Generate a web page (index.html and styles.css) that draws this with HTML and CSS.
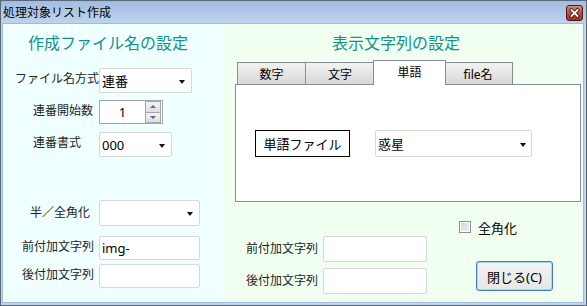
FILE: index.html
```html
<!DOCTYPE html>
<html>
<head>
    <title>処理対象リスト作成</title>
    <meta charset="utf-8">
    <link rel="stylesheet" href="styles.css">
</head>
<body>
    <div class="window">
        <div class="titlebar">
            <span class="title">処理対象リスト作成</span>
            <span class="close-btn">
                <svg width="17" height="16" viewBox="0 0 17 16">
                    <path d="M5.5 5 L11.5 11 M11.5 5 L5.5 11" stroke="#3a1410" stroke-width="3.4" stroke-linecap="square"/>
                    <path d="M5.5 5 L11.5 11 M11.5 5 L5.5 11" stroke="#fff" stroke-width="1.8" stroke-linecap="square"/>
                </svg>
            </span>
        </div>

        <div class="client">
            <!-- 左：作成ファイル名 -->
            <section class="pane pane-file">
                <h2 class="pane-title">作成ファイル名の設定</h2>

                <div class="form-row row-method">
                    <label class="lbl lbl-method">ファイル名方式</label>
                    <div class="combo combo-method"><span>連番</span><i class="caret"></i></div>
                </div>
                <div class="form-row row-start">
                    <label class="lbl lbl-seq">連番開始数</label>
                    <div class="spin">
                        <span class="spin-value">1</span>
                        <div class="spin-btns">
                            <span class="spin-btn"><i class="arrow-up"></i></span>
                            <span class="spin-btn"><i class="arrow-down"></i></span>
                        </div>
                    </div>
                </div>
                <div class="form-row row-format">
                    <label class="lbl lbl-seq">連番書式</label>
                    <div class="combo combo-format"><span>000</span><i class="caret"></i></div>
                </div>
                <div class="form-row row-width">
                    <label class="lbl lbl-width">半／全角化</label>
                    <div class="combo combo-width"><span></span><i class="caret"></i></div>
                </div>
                <div class="form-row row-prefix">
                    <label class="lbl lbl-fix">前付加文字列</label>
                    <div class="textbox textbox-left">img-</div>
                </div>
                <div class="form-row row-suffix">
                    <label class="lbl lbl-fix">後付加文字列</label>
                    <div class="textbox textbox-left"></div>
                </div>
            </section>

            <!-- 右：表示文字列 -->
            <section class="pane pane-text">
                <h2 class="pane-title title-right">表示文字列の設定</h2>

                <div class="tabs">
                    <span class="tab">数字</span>
                    <span class="tab">文字</span>
                    <span class="tab active">単語</span>
                    <span class="tab">file名</span>
                </div>
                <div class="tab-panel">
                    <div class="word-row">
                        <span class="word-label">単語ファイル</span>
                        <div class="combo combo-word"><span>惑星</span><i class="caret"></i></div>
                    </div>
                </div>

                <div class="check-row">
                    <span class="checkbox"></span>
                    <span>全角化</span>
                </div>

                <div class="extras">
                    <label class="lbl-right">前付加文字列</label>
                    <div class="textbox textbox-right"></div>
                    <button class="close-action">閉じる(C)</button>
                    <label class="lbl-right">後付加文字列</label>
                    <div class="textbox textbox-right"></div>
                </div>
            </section>
        </div>
    </div>
</body>
</html>
```

FILE: styles.css
```css
:root {
    --frame-color: #c0d5ee;
    --label-color: #1e2424;
    --heading-color: #10928f;
    --field-border: #d6d9dc;
}

* {
    box-sizing: border-box;
}

body {
    margin: 0;
    font-family: "Noto Sans", "Noto Sans CJK JP", sans-serif;
    font-size: 12px;
    color: var(--label-color);
}

.window {
    width: 587px;
    height: 306px;
    border: 1px solid #5b6878;
    background-color: var(--frame-color);
    padding: 0 3px 3px 2px;
    display: flex;
    flex-direction: column;
}

.titlebar {
    height: 23px;
    margin: 0 -3px 0 -2px;
    padding: 0 3px 0 2px;
    background: linear-gradient(to bottom, #a2bde0, #bfd4ee);
    display: flex;
    align-items: center;
    justify-content: space-between;
}

.title {
    font-size: 12px;
    color: #000;
    line-height: 16px;
}

.close-btn {
    width: 17px;
    height: 16px;
    margin-top: 1px;
    border: 1px solid #4e1a12;
    border-radius: 3px;
    background: linear-gradient(to bottom, #d88a78, #c0533e 45%, #a8301c);
    display: flex;
}

.close-btn svg {
    margin: -1px;
}

.client {
    flex: 1;
    display: flex;
    box-shadow: 0 0 0 1px #9fbbdc;
}

.pane {
    height: 100%;
}

.pane-file {
    width: 220px;
    background-color: #f0ffff;
}

.pane-text {
    flex: 1;
    background-color: #f0fff0;
}

.pane-title {
    margin: 0;
    padding: 9px 0 0 25px;
    font-size: 16px;
    line-height: 20px;
    font-weight: normal;
    color: var(--heading-color);
}

.title-right {
    padding-left: 109px;
}

/* 左側フォーム */
.form-row {
    display: flex;
    align-items: center;
}

.row-method { margin-top: 15px; height: 25px; }
.row-start  { margin-top: 7px;  height: 24px; }
.row-format { margin-top: 8px;  height: 25px; }
.row-width  { margin-top: 43px; height: 26px; }
.row-prefix { margin-top: 10px; height: 24px; }
.row-suffix { margin-top: 4px;  height: 24px; }

.lbl {
    width: 96px;
    flex-shrink: 0;
    line-height: 16px;
    white-space: nowrap;
    margin-top: -3px;
}

.lbl-method { padding-left: 12px; }
.lbl-seq    { padding-left: 30px; }
.lbl-width  { padding-left: 27px; margin-top: 0; }
.lbl-fix    { padding-left: 19px; }

.combo,
.textbox {
    position: relative;
    height: 100%;
    background-color: #fff;
    border: 1px solid var(--field-border);
    border-radius: 2px;
    padding-left: 2px;
    display: flex;
    align-items: center;
    color: #000;
    font-size: 12px;
}

.combo span {
    font-size: 13px;
}

.caret {
    position: absolute;
    right: 6px;
    top: 50%;
    margin-top: -1px;
    border-left: 3.5px solid transparent;
    border-right: 3.5px solid transparent;
    border-top: 4px solid #111;
}

.combo-method { width: 93px; }
.combo-format { width: 73px; }
.combo-width  { width: 101px; }
.textbox-left { width: 101px; font-size: 13px; }

.spin {
    width: 64px;
    height: 100%;
    background-color: #fff;
    border: 1px solid #a6a6a6;
    display: flex;
    align-items: center;
}

.spin-value {
    flex: 1;
    text-align: center;
    font-size: 13px;
    color: #000;
}

.spin-btns {
    width: 16px;
    height: 22px;
    margin-right: 1px;
    display: flex;
    flex-direction: column;
    border: 1px solid #a8a8a8;
    gap: 1px;
    background-color: #a8a8a8;
}

.spin-btn {
    flex: 1;
    background: linear-gradient(to bottom, #f4f4f4, #dedede);
    display: flex;
    align-items: center;
    justify-content: center;
}

.arrow-up,
.arrow-down {
    border-left: 3px solid transparent;
    border-right: 3px solid transparent;
}

.arrow-up   { border-bottom: 3px solid #4d69a8; }
.arrow-down { border-top: 3px solid #4d69a8; }

/* タブ */
.tabs {
    display: flex;
    align-items: flex-end;
    height: 24px;
    margin: 7px 0 0 14px;
    position: relative;
    z-index: 1;
}

.tab {
    width: 69px;
    height: 22px;
    border: 1px solid #898c95;
    border-bottom: none;
    background: linear-gradient(to bottom, #f2f2f2, #d8d8d8);
    display: flex;
    justify-content: center;
    align-items: center;
    color: #000;
    font-size: 12px;
    padding-top: 1px;
}

.tab + .tab {
    border-left: none;
}

.tab.active {
    width: 73px;
    height: 25px;
    margin: 0 -2px -1px;
    border-left: 1px solid #898c95;
    background: #fff;
    padding-bottom: 4px;
    position: relative;
}

.tab.active + .tab {
    border-left: none;
}

.tab-panel {
    width: 346px;
    height: 118px;
    margin-left: 12px;
    border: 1px solid #898c95;
    background-color: #fff;
    padding: 45px 0 0 19px;
}

.word-row {
    display: flex;
    height: 27px;
}

.word-label {
    width: 95px;
    border: 1px solid #000;
    display: flex;
    align-items: center;
    justify-content: center;
    font-size: 13px;
    color: #000;
}

.combo-word {
    width: 157px;
    margin-left: 25px;
}

.combo-word .caret {
    right: 5px;
}

/* 下部 */
.check-row {
    display: flex;
    align-items: center;
    height: 14px;
    margin: 18px 0 0 236px;
    gap: 7px;
    color: #000;
    font-size: 13px;
}

.checkbox {
    width: 12px;
    height: 12px;
    border: 1px solid #8f8f8f;
    background: linear-gradient(135deg, #d4d4d4, #f2f2f2);
    box-shadow: inset 0 0 0 1px #fff;
}

.extras {
    display: grid;
    grid-template-columns: 71px 104px 77px;
    grid-template-rows: 26px 26px;
    column-gap: 6px;
    row-gap: 6px;
    margin: 2px 0 0 23px;
    align-items: center;
}

.lbl-right {
    white-space: nowrap;
    line-height: 16px;
}

.textbox-right {
    width: 104px;
}

.close-action {
    grid-column: 3;
    grid-row: 1 / span 2;
    align-self: start;
    margin: 25px 0 0 43px;
    width: 77px;
    height: 30px;
    border: 1px solid #3c7fb1;
    border-radius: 3px;
    background: linear-gradient(to bottom, #f4f4f4, #e6e6e6);
    box-shadow: inset 0 0 0 1px #a6d8f5;
    font-family: inherit;
    font-size: 13px;
    color: #000;
    padding: 0;
}
```
